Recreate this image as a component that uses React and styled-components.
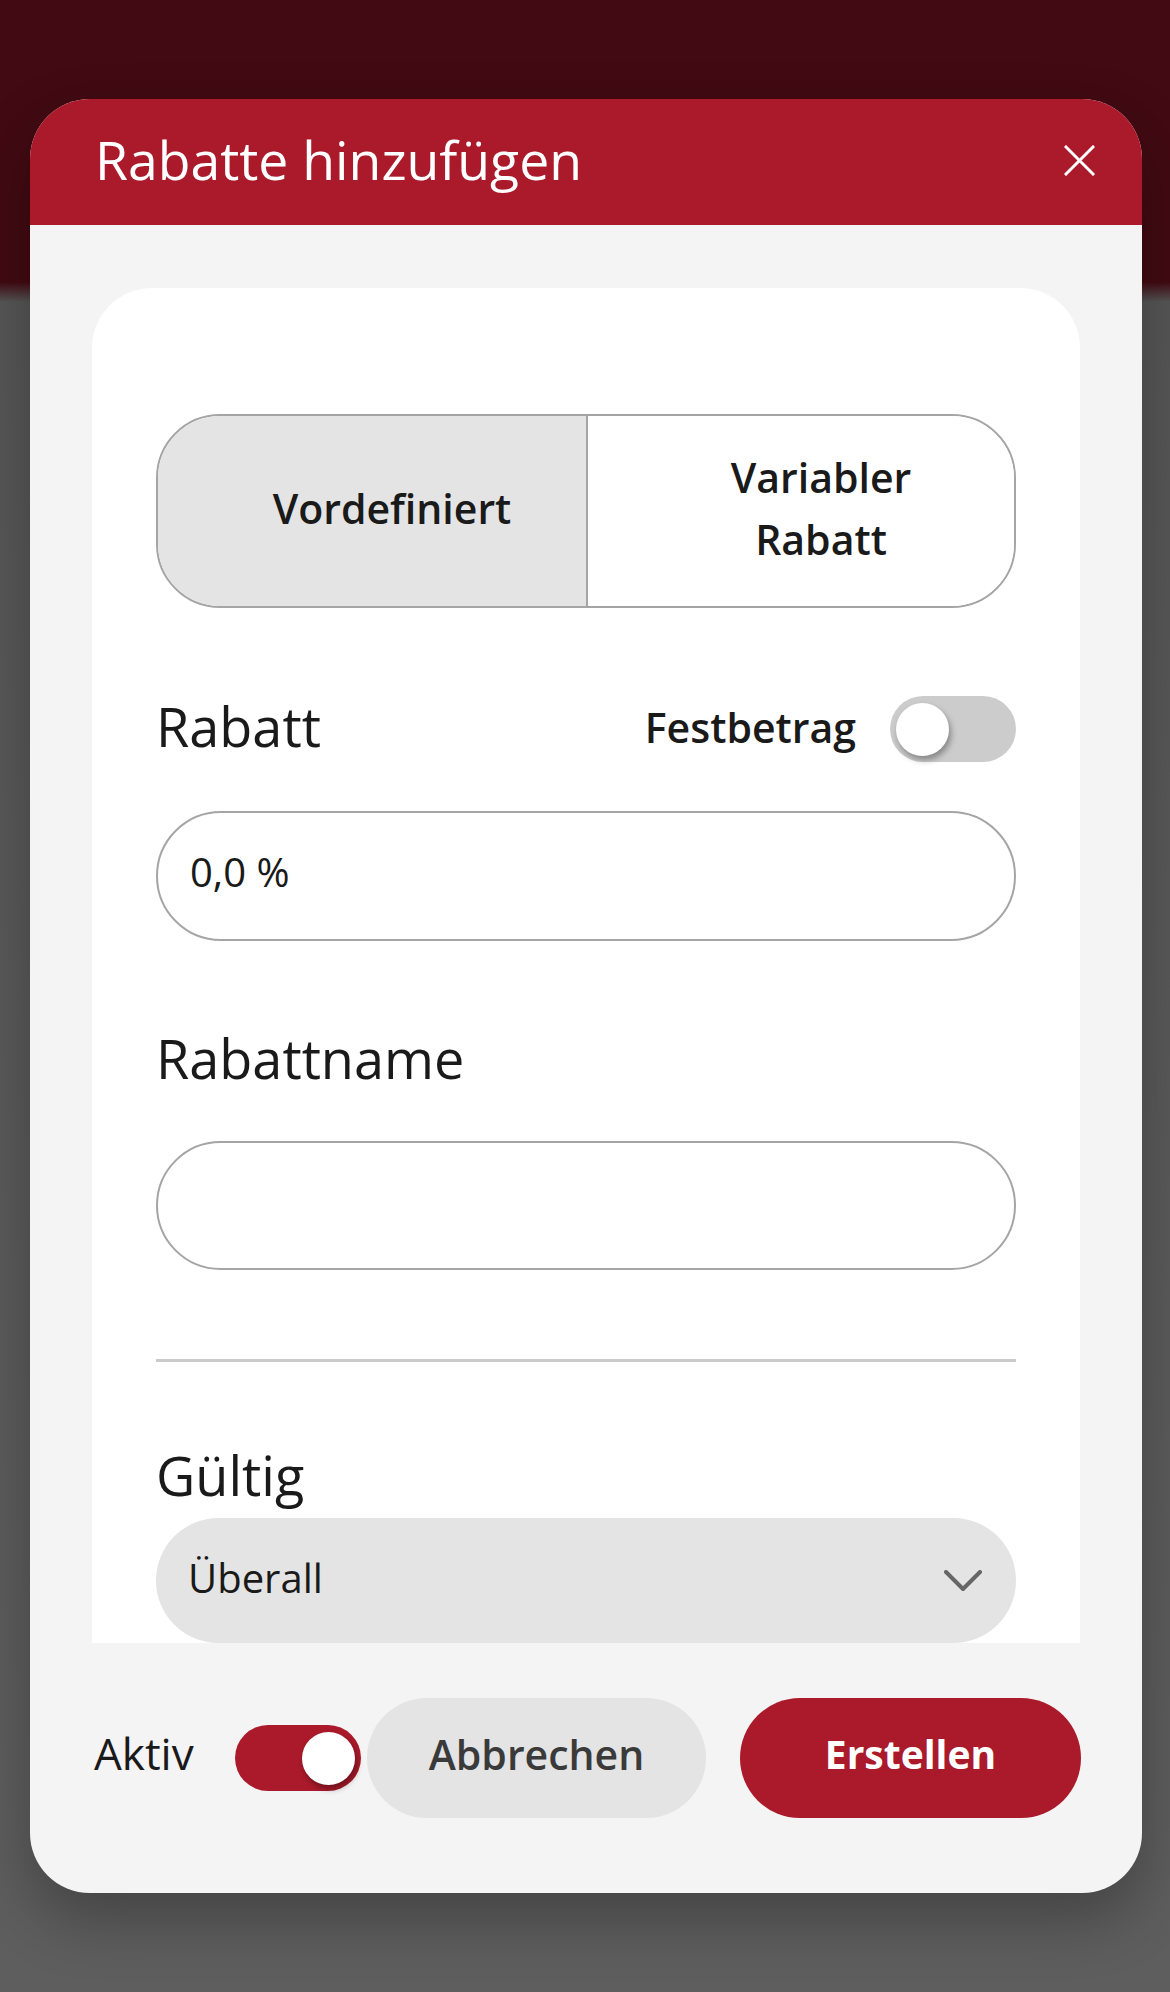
import React from "react";
import styled, { createGlobalStyle } from "styled-components";

const GlobalStyle = createGlobalStyle`
  body {
    margin: 0;
    font-family: "Open Sans", "Noto Sans", sans-serif;
    color: #1a1a1a;
  }
  * {
    box-sizing: border-box;
  }
`;

const Page = styled.div`
  min-height: 1992px;
  padding-top: 99px;
  background: linear-gradient(
    to bottom,
    #420a12 0,
    #420a12 282px,
    #565656 302px,
    #5e5e5e 100%
  );
`;

const Modal = styled.div`
  width: 1112px;
  height: 1794px;
  margin-left: 30px;
  border-radius: 60px;
  overflow: hidden;
  background: #f4f4f4;
  display: flex;
  flex-direction: column;
  box-shadow: 0 26px 60px rgba(0, 0, 0, 0.28);
`;

const Header = styled.header`
  height: 126px;
  flex-shrink: 0;
  background: #ab1a2b;
  display: flex;
  align-items: center;
  justify-content: space-between;
  padding: 0 47px 4px 65px;
`;

const Title = styled.h1`
  margin: 0;
  font-size: 53.5px;
  font-weight: 400;
  color: #fff;
  line-height: 60px;
`;

const CloseButton = styled.button`
  width: 31px;
  height: 31px;
  padding: 0;
  border: none;
  background: none;
  display: flex;
`;

const Body = styled.div`
  padding: 63px 62px 0;
`;

const Card = styled.div`
  height: 1355px;
  background: #fff;
  border-radius: 60px 60px 0 0;
  padding: 126px 64px 0;
  overflow: hidden;
  display: flex;
  flex-direction: column;
`;

const Segmented = styled.div`
  height: 194px;
  display: grid;
  grid-template-columns: 1fr 1fr;
  border: 2px solid #a5a5a5;
  border-radius: 64px;
  overflow: hidden;
`;

const Segment = styled.div`
  display: flex;
  align-items: center;
  justify-content: center;
  text-align: center;
  padding: 0 60px 6px 100px;
  font-size: 41px;
  font-weight: 600;
  line-height: 62px;
  background: ${(p) => (p.$active ? "#e4e4e4" : "#fff")};
  border-left: ${(p) => (p.$divider ? "2px solid #a5a5a5" : "none")};
`;

const FieldRow = styled.div`
  margin-top: 88px;
  height: 66px;
  display: flex;
  align-items: center;
  justify-content: space-between;
`;

const Label = styled.div`
  margin-top: ${(p) => p.$top || 0}px;
  padding-bottom: ${(p) => p.$bottom || 0}px;
  font-size: 54px;
  line-height: 60px;
  font-weight: 400;
`;

const ToggleGroup = styled.div`
  display: flex;
  align-items: center;
  gap: 34px;
`;

const SmallLabel = styled.span`
  font-size: 41px;
  font-weight: 600;
  padding-bottom: 5px;
`;

const Switch = styled.div`
  width: 126px;
  height: 66px;
  flex-shrink: 0;
  border-radius: 33px;
  padding: 0 6px;
  display: flex;
  align-items: center;
  justify-content: ${(p) => (p.$on ? "flex-end" : "flex-start")};
  background: ${(p) => (p.$on ? "#ab1a2b" : "#cccccc")};
  margin-left: ${(p) => p.$left || 0}px;
`;

const Thumb = styled.div`
  width: 53px;
  height: 53px;
  border-radius: 50%;
  background: #fff;
  box-shadow: 2px 4px 6px rgba(0, 0, 0, 0.35);
`;

const TextInput = styled.input`
  display: block;
  width: 100%;
  height: ${(p) => p.$h || 130}px;
  margin-top: ${(p) => p.$top || 0}px;
  border: 2px solid #a5a5a5;
  border-radius: 65px;
  padding: 0 32px 9px;
  font-family: inherit;
  font-size: 40px;
  color: #1a1a1a;
  background: #fff;
  outline: none;
`;

const Divider = styled.hr`
  margin: 89px 0 0;
  height: 3px;
  border: none;
  background: #cacaca;
`;

const Select = styled.div`
  margin-top: 10px;
  height: 125px;
  flex-shrink: 0;
  border-radius: 63px;
  background: #e4e4e4;
  display: flex;
  align-items: center;
  justify-content: space-between;
  padding: 0 34px 0 32px;
  font-size: 40px;
`;

const SelectValue = styled.span`
  padding-bottom: 7px;
`;

const Footer = styled.footer`
  flex: 1;
  display: flex;
  align-items: center;
  padding: 55px 61px 75px 64px;
`;

const FooterLabel = styled.span`
  font-size: 44px;
  font-weight: 400;
  padding-bottom: 10px;
`;

const Buttons = styled.div`
  margin-left: auto;
  display: flex;
  gap: 34px;
`;

const Button = styled.button`
  width: ${(p) => (p.$primary ? 341 : 339)}px;
  height: 120px;
  border: none;
  border-radius: 60px;
  padding: 0 0 9px;
  font-family: inherit;
  font-size: ${(p) => (p.$primary ? 39 : 41)}px;
  font-weight: ${(p) => (p.$primary ? 700 : 600)};
  background: ${(p) => (p.$primary ? "#ab1a2b" : "#e4e4e4")};
  color: ${(p) => (p.$primary ? "#fff" : "#3a3a3a")};
`;

const CloseIcon = () => (
  <svg width="31" height="31" viewBox="0 0 31 31">
    <path d="M2 2 L29 29 M29 2 L2 29" stroke="#fff" strokeWidth="3" strokeLinecap="square" />
  </svg>
);

const Chevron = () => (
  <svg width="38" height="22" viewBox="0 0 38 22">
    <path d="M2 2 L19 19 L36 2" fill="none" stroke="#666" strokeWidth="4" strokeLinecap="round" strokeLinejoin="round" />
  </svg>
);

export default function App() {
  return (
    <Page>
      <GlobalStyle />
      <Modal>
        <Header>
          <Title>Rabatte hinzufügen</Title>
          <CloseButton aria-label="Schließen">
            <CloseIcon />
          </CloseButton>
        </Header>
        <Body>
          <Card>
            <Segmented>
              <Segment $active>Vordefiniert</Segment>
              <Segment $divider>Variabler Rabatt</Segment>
            </Segmented>

            <FieldRow>
              <Label $bottom={6}>Rabatt</Label>
              <ToggleGroup>
                <SmallLabel>Festbetrag</SmallLabel>
                <Switch>
                  <Thumb />
                </Switch>
              </ToggleGroup>
            </FieldRow>
            <TextInput $top={49} defaultValue="0,0 %" />

            <Label $top={87} $bottom={3}>Rabattname</Label>
            <TextInput $top={50} $h={129} />

            <Divider />

            <Label $top={83} $bottom={3}>Gültig</Label>
            <Select>
              <SelectValue>Überall</SelectValue>
              <Chevron />
            </Select>
          </Card>
        </Body>
        <Footer>
          <FooterLabel>Aktiv</FooterLabel>
          <Switch $on $left={41}>
            <Thumb />
          </Switch>
          <Buttons>
            <Button>Abbrechen</Button>
            <Button $primary>Erstellen</Button>
          </Buttons>
        </Footer>
      </Modal>
    </Page>
  );
}
